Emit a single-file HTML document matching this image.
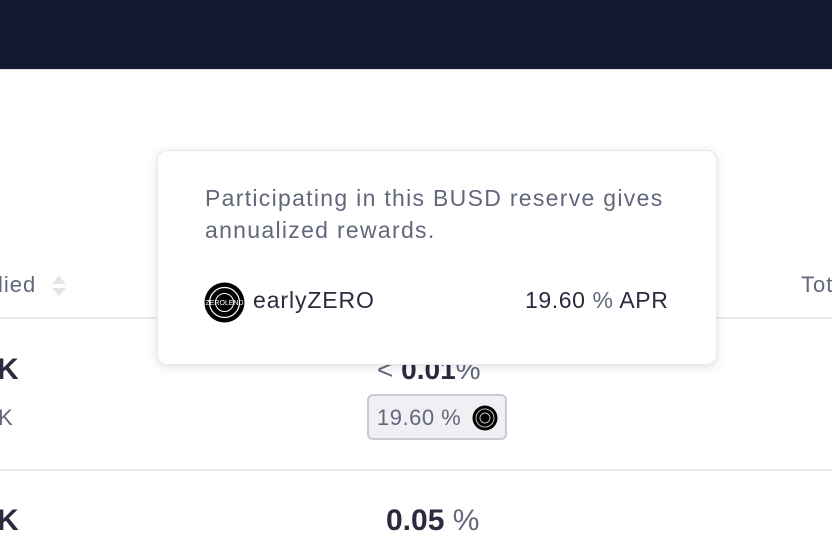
<!DOCTYPE html>
<html><head><meta charset="utf-8"><style>
body{margin:0;width:832px;height:542px;overflow:hidden;background:#fff;font-family:"Liberation Sans",sans-serif;position:relative;color:#2a2b3f}
.top{position:absolute;left:0;top:0;width:832px;height:69px;background:#141831}
.line{position:absolute;left:0;width:832px;height:2px;background:#eaebef}
.t{position:absolute;white-space:nowrap}
.tip{position:absolute;left:157px;top:150px;width:560px;height:215px;background:#fff;border-radius:10px;box-shadow:0 2px 10px rgba(0,0,0,.12);border:1px solid #e8e8ee;box-sizing:border-box}
</style></head><body>
<div class="top"></div>
<div class="line" style="top:69px;height:1px;background:#e5e6ec"></div>
<div class="t" style="left:-2px;top:272px;font-size:22px;color:#62677b;letter-spacing:1px">lied</div>
<svg class="t" style="left:51px;top:275px" width="16" height="22"><path d="M1 9 L8 1 L15 9Z M1 13 L8 21 L15 13Z" fill="#e3e4ea"/></svg>
<div class="t" style="left:801px;top:272px;font-size:22px;color:#62677b;letter-spacing:1px">Tot</div>
<div class="line" style="top:317px"></div>
<div class="t" style="left:-3px;top:353px;font-size:30px;font-weight:bold;color:#2a2b3f">K</div>
<div class="t" style="left:-2px;top:405px;font-size:22px;color:#62677b">K</div>
<div class="line" style="top:469px"></div>
<div class="t" style="left:-3px;top:504px;font-size:30px;font-weight:bold;color:#2a2b3f">K</div>
<div class="t" style="left:377px;top:354px;font-size:28px;color:#2a2b3f"><span style="color:#62677b">&lt;</span> <b>0.01</b><span style="color:#62677b">%</span></div>
<div style="position:absolute;left:367px;top:394px;width:140px;height:46px;box-sizing:border-box;border:2px solid #c8cad5;border-radius:6px;background:#f0f0f4"></div>
<div class="t" style="left:377px;top:405px;font-size:22px;color:#62677b;letter-spacing:0.5px">19.60 %</div>
<svg class="t" style="left:472px;top:405px" width="26" height="26"><circle cx="13" cy="13" r="12.5" fill="#000"/><circle cx="13" cy="13" r="9" fill="none" stroke="#bbb" stroke-width="1"/><circle cx="13" cy="13" r="5" fill="none" stroke="#bbb" stroke-width="1"/></svg>
<div class="t" style="left:386px;top:504px;font-size:30px;color:#2a2b3f"><b>0.05</b><span style="color:#62677b"> %</span></div>
<div class="tip"></div>
<div class="t" style="left:205px;top:182px;font-size:23px;line-height:32px;color:#62677b;letter-spacing:1.3px">Participating in this BUSD reserve gives<br>annualized rewards.</div>
<svg class="t" style="left:204px;top:282px" width="41" height="41"><circle cx="20.5" cy="20.5" r="20" fill="#000"/><circle cx="20.5" cy="20.5" r="15" fill="none" stroke="#fff" stroke-width="1.2"/><circle cx="20.5" cy="20.5" r="9" fill="none" stroke="#fff" stroke-width="1"/><text x="20.5" y="23" font-size="7" fill="#fff" text-anchor="middle" font-family="Liberation Sans">ZEROLEND</text></svg>
<div class="t" style="left:253px;top:287px;font-size:23px;color:#2a2b3f;letter-spacing:0.9px">earlyZERO</div>
<div class="t" style="left:525px;top:287px;font-size:23px;color:#2a2b3f;letter-spacing:0.6px">19.60 <span style="color:#62677b">%</span> APR</div>
</body></html>
